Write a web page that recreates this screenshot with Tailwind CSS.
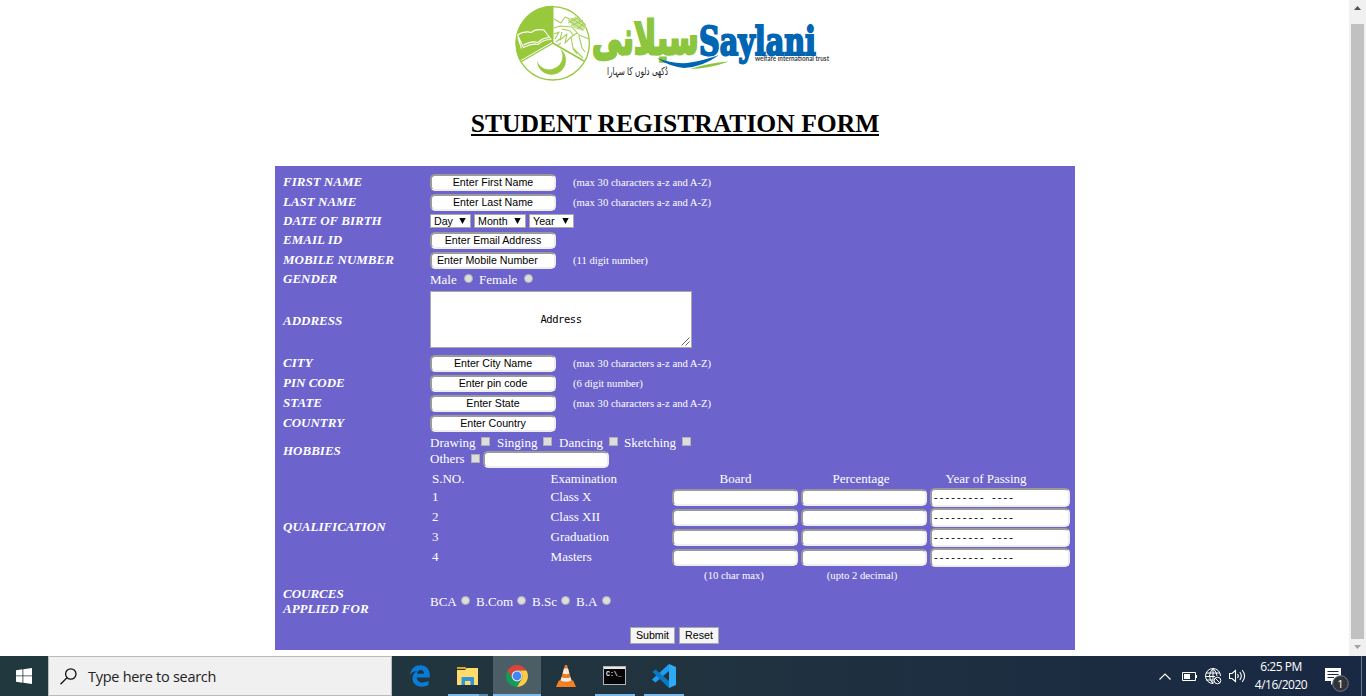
<!DOCTYPE html>
<html lang="en">
<head>
<meta charset="utf-8">
<title>Student Registration Form</title>
<script src="https://cdn.jsdelivr.net/npm/@tailwindcss/browser@4"></script>
</head>
<body class="w-[1366px] h-[696px] overflow-hidden bg-white flex flex-col">
<div class="flex h-[656px] w-full">
<main class="w-[1349px] h-[656px] flex flex-col pl-[275px] font-['Liberation_Serif',serif] text-[13px] leading-[15px] text-white">
  <header class="w-[800px] h-[166px] flex flex-col items-center text-black">
    <svg class="w-[320px] h-[90px] shrink-0" viewBox="515 0 320 90">
      <circle cx="552.7" cy="43.300" r="36.7" fill="#fff"/>
      <path d="M552.7 43V5.8A37 37 0 0 0 521 62Z" fill="#98c93c"/>
      <circle cx="552.7" cy="43.300" r="36.7" fill="none" stroke="#98c93c" stroke-width="1.3"/>
      <path d="M552.7 6V43L521 61.5M552.7 43L584 61" fill="none" stroke="#98c93c" stroke-width="1.6"/>
      <path d="M552 42.5L521 60.5" stroke="#fff" stroke-width="1" fill="none"/>
      <path d="M517.500 35L523.500 47.500Q533 43 538 44.500Q543 39.500 551 39.500L544 30Q535 28.500 531.500 32.500Q524 30.500 517.500 35ZM518 37.500L521.500 48.500M523.500 45Q532 40.500 538 42.500Q542 38 549 37.500" fill="#98c93c" stroke="#fff" stroke-width="1.1" stroke-linejoin="round"/>
      <path d="M560 48.500A14.500 14.500 0 1 1 537 61A13.200 13.200 0 1 0 560 48.500Z" fill="#98c93c"/>
      <path d="M554 19L561 23L565 17L570 19M554 28L560 26L572 27L579 35L589 39M554 34L559 32L555 39M562 32L560 40L567 34L565 43L571 37L573 48L583 58M556 42L561 38M571 37L577 33M561 43L558 45M579 36L582 48L585 52M562 29L570 31L574 36M573 49L577 54" fill="none" stroke="#a5cf56" stroke-width="1.1" stroke-linejoin="round"/>
      <path d="M568 20Q574 15 581 20L586 27L583 31L574 28Z" fill="#cce49f"/>
      <path d="M568 20L583 30M571 18L585 27M575 17L586 25M568 23L579 17M571 26L583 20M577 29L585 23" stroke="#98c93c" stroke-width=".8" fill="none"/>
      <text transform="translate(592 54) scale(1.16 1.65)" x="0" y="0" textLength="92" lengthAdjust="spacingAndGlyphs" direction="ltr" font-family="DejaVu Sans" font-weight="bold" font-size="28" fill="#8cc63f" stroke="#8cc63f" stroke-width="1.7">سیلانی</text>
      <path d="M657 58Q672 64 687 63Q706 60 719 55Q703 67 684 68Q668 66 657 58Z" fill="#0066b3"/>
      <path d="M690 69Q708 69 729 61.500Q712 62 690 69Z" fill="#8cc63f"/>
      <text x="699" y="54.500" textLength="117" lengthAdjust="spacingAndGlyphs" font-family="DejaVu Serif Condensed, DejaVu Serif" font-weight="bold" font-size="39" fill="#0066b3" stroke="#0066b3" stroke-width="2">Saylani</text>
      <text x="755" y="61" textLength="74" lengthAdjust="spacingAndGlyphs" font-family="Lato" font-weight="bold" font-size="7" fill="#444">welfare international trust</text>
      <text x="607" y="75" textLength="61" lengthAdjust="spacingAndGlyphs" direction="ltr" font-family="DejaVu Sans" font-size="11" fill="#222">دُکھی دلوں کا سہارا</text>
    </svg>
    <h1 class="mt-[18px] text-[25.6px] leading-8 font-bold whitespace-nowrap"><span class="inline-block h-[28px] leading-8 border-b-2 border-black">STUDENT REGISTRATION FORM</span></h1>
  </header>

  <form class="w-[800px] h-[484px] bg-[#6c63cc] pl-2 pt-[6px] flex flex-col [&_input]:w-[126px] [&_input]:h-[17px] [&_input]:pb-[2px] [&_input]:rounded-[5px] [&_input]:border-2 [&_input]:border-t-[#9a9a9a] [&_input]:border-l-[#9a9a9a] [&_input]:border-b-[#eee] [&_input]:border-r-[#eee] [&_input]:bg-white [&_input]:text-black [&_input]:font-['Liberation_Sans',sans-serif] [&_input]:text-[10.67px] [&_i]:size-[9px] [&_i]:bg-[#ddd] [&_i]:border [&_i]:border-[#b0b0b0]">
    <div class="flex h-5"><b class="w-[147px] italic pt-[2px]">FIRST NAME</b><input class="mt-[2px] text-center" value="Enter First Name"><span class="ml-[17px] mt-[3px] text-[10.67px]">(max 30 characters a-z and A-Z)</span></div>
    <div class="flex h-5"><b class="w-[147px] italic pt-[2px]">LAST NAME</b><input class="mt-[2px] text-center" value="Enter Last Name"><span class="ml-[17px] mt-[3px] text-[10.67px]">(max 30 characters a-z and A-Z)</span></div>
    <div class="flex h-[18px]"><b class="w-[147px] italic pt-[1px]">DATE OF BIRTH</b>
      <div class="flex gap-[3px] pt-[2px] font-['Liberation_Sans',sans-serif] text-[10.67px] leading-[13px] text-black">
        <span class="w-[41px] h-[14px] bg-white border border-[#a9a9a9] pl-[3px] pr-[4px] flex justify-between items-center">Day<svg class="w-[7px] h-[6px]" viewBox="0 0 7 6"><path d="M.3 0h6.400L3.500 6Z"/></svg></span>
        <span class="w-[52px] h-[14px] bg-white border border-[#a9a9a9] pl-[3px] pr-[4px] flex justify-between items-center">Month<svg class="w-[7px] h-[6px]" viewBox="0 0 7 6"><path d="M.3 0h6.400L3.500 6Z"/></svg></span>
        <span class="w-[45px] h-[14px] bg-white border border-[#a9a9a9] pl-[3px] pr-[4px] flex justify-between items-center">Year<svg class="w-[7px] h-[6px]" viewBox="0 0 7 6"><path d="M.3 0h6.400L3.500 6Z"/></svg></span>
      </div></div>
    <div class="flex h-5"><b class="w-[147px] italic pt-[2px]">EMAIL ID</b><input class="mt-[2px] text-center" value="Enter Email Address"></div>
    <div class="flex h-5"><b class="w-[147px] italic pt-[2px]">MOBILE NUMBER</b><input class="mt-[2px] pl-[5px]" value="Enter Mobile Number"><span class="ml-[17px] mt-[3px] text-[10.67px]">(11 digit number)</span></div>
    <div class="flex h-[19px]"><b class="w-[147px] italic pt-[1px]">GENDER</b>
      <span class="pt-[2px] w-[34px]">Male</span><i class="mt-[4px] rounded-full"></i>
      <span class="pt-[2px] ml-[6px] w-[45px]">Female</span><i class="mt-[4px] rounded-full"></i></div>
    <div class="flex h-[64px]"><b class="w-[147px] italic pt-[24px]">ADDRESS</b>
      <div class="mt-[2px] w-[262px] h-[57px] bg-white border border-[#a9a9a9] text-black flex items-center justify-center relative font-['DejaVu_Sans_Mono',monospace] text-[10.5px] tracking-[-0.45px]">Address<svg class="absolute right-[1px] bottom-[1px] size-[9px]" viewBox="0 0 9 9"><path d="M.5 8.500L8.500 .5M4.500 8.500L8.500 4.500" stroke="#666" stroke-width="1"/></svg></div></div>
    <div class="flex h-5"><b class="w-[147px] italic pt-[2px]">CITY</b><input class="mt-[2px] text-center" value="Enter City Name"><span class="ml-[17px] mt-[3px] text-[10.67px]">(max 30 characters a-z and A-Z)</span></div>
    <div class="flex h-5"><b class="w-[147px] italic pt-[2px]">PIN CODE</b><input class="mt-[2px] text-center" value="Enter pin code"><span class="ml-[17px] mt-[3px] text-[10.67px]">(6 digit number)</span></div>
    <div class="flex h-5"><b class="w-[147px] italic pt-[2px]">STATE</b><input class="mt-[2px] text-center" value="Enter State"><span class="ml-[17px] mt-[3px] text-[10.67px]">(max 30 characters a-z and A-Z)</span></div>
    <div class="flex h-5"><b class="w-[147px] italic pt-[2px]">COUNTRY</b><input class="mt-[2px] text-center" value="Enter Country"></div>
    <div class="flex h-[36px]"><b class="w-[147px] italic pt-[10px]">HOBBIES</b>
      <div>
        <div class="flex h-[18px] pt-[2px]">
          <span class="w-[51px]">Drawing</span><i class="mt-[2px]"></i>
          <span class="ml-[7px] w-[46px]">Singing</span><i class="mt-[2px]"></i>
          <span class="ml-[7px] w-[50px]">Dancing</span><i class="mt-[2px]"></i>
          <span class="ml-[6px] w-[58px]">Sketching</span><i class="mt-[2px]"></i>
        </div>
        <div class="flex"><span class="w-[41px]">Others</span><i class="mt-[3px]"></i><input class="ml-[3px]"></div>
      </div></div>
    <div class="flex h-[116px]"><b class="w-[147px] italic pt-[50px]">QUALIFICATION</b>
      <div class="flex">
        <div class="w-[242px] pl-[2px]">
          <div class="grid grid-cols-[118.6px_1fr] h-[18px] pt-[2px]"><span>S.NO.</span><span>Examination</span></div>
          <div class="grid grid-cols-[118.6px_1fr] h-5 pt-[2px]"><span>1</span><span>Class X</span></div>
          <div class="grid grid-cols-[118.6px_1fr] h-5 pt-[2px]"><span>2</span><span>Class XII</span></div>
          <div class="grid grid-cols-[118.6px_1fr] h-5 pt-[2px]"><span>3</span><span>Graduation</span></div>
          <div class="grid grid-cols-[118.6px_1fr] h-5 pt-[2px]"><span>4</span><span>Masters</span></div>
        </div>
        <div class="w-[129px] flex flex-col">
          <span class="h-5 pt-[2px] w-[127px] text-center">Board</span>
          <div class="flex flex-col gap-[3px]"><input><input><input><input></div>
          <span class="mt-[2px] w-[124px] text-center text-[10.67px]">(10 char max)</span>
        </div>
        <div class="w-[129px] flex flex-col">
          <span class="h-5 pt-[2px] w-[120px] text-center">Percentage</span>
          <div class="flex flex-col gap-[3px]"><input><input><input><input></div>
          <span class="mt-[2px] w-[122px] text-center text-[10.67px]">(upto 2 decimal)</span>
        </div>
        <div class="flex flex-col">
          <span class="h-[19px] pt-[2px] w-[112px] text-center">Year of Passing</span>
          <div class="flex flex-col gap-[1px] text-black font-['Liberation_Sans',sans-serif] text-[11px] leading-[15px] tracking-[2.1px] whitespace-nowrap">
            <div class="w-[140px] h-[19px] rounded-[5px] border-2 border-t-[#9a9a9a] border-l-[#9a9a9a] border-b-[#eee] border-r-[#eee] bg-white flex pl-[2px]"><span class="w-[58px]">---------</span><span>----</span></div>
            <div class="w-[140px] h-[19px] rounded-[5px] border-2 border-t-[#9a9a9a] border-l-[#9a9a9a] border-b-[#eee] border-r-[#eee] bg-white flex pl-[2px]"><span class="w-[58px]">---------</span><span>----</span></div>
            <div class="w-[140px] h-[19px] rounded-[5px] border-2 border-t-[#9a9a9a] border-l-[#9a9a9a] border-b-[#eee] border-r-[#eee] bg-white flex pl-[2px]"><span class="w-[58px]">---------</span><span>----</span></div>
            <div class="w-[140px] h-[19px] rounded-[5px] border-2 border-t-[#9a9a9a] border-l-[#9a9a9a] border-b-[#eee] border-r-[#eee] bg-white flex pl-[2px]"><span class="w-[58px]">---------</span><span>----</span></div>
          </div>
        </div>
      </div></div>
    <div class="flex h-[42px]"><b class="w-[147px] italic pt-[1px]">COURCES<br>APPLIED FOR</b>
      <div class="flex pt-[9px]">
        <span class="w-[31px]">BCA</span><i class="mt-[2px] rounded-full"></i>
        <span class="ml-[6px] w-[41px]">B.Com</span><i class="mt-[2px] rounded-full"></i>
        <span class="ml-[6px] w-[29px]">B.Sc</span><i class="mt-[2px] rounded-full"></i>
        <span class="ml-[6px] w-[26px]">B.A</span><i class="mt-[2px] rounded-full"></i>
      </div></div>
    <div class="flex gap-[4px] pl-[347px] font-['Liberation_Sans',sans-serif] text-[10.67px] leading-[15px] text-black">
      <button type="button" class="w-[45px] h-[17px] border border-[#a9a9a9] bg-[#f5f5f5]">Submit</button>
      <button type="button" class="w-[40px] h-[17px] border border-[#a9a9a9] bg-[#f5f5f5]">Reset</button>
    </div>
  </form>
</main>
<aside class="w-[17px] h-[656px] bg-[#f1f1f1] flex flex-col items-center">
  <svg class="w-[7px] h-[4px] mt-[6px] mb-[14px]" viewBox="0 0 7 4"><path d="M0 4L3.500 0L7 4Z" fill="#505050"/></svg>
  <div class="w-[13px] h-[615px] bg-[#c1c1c1]"></div>
  <svg class="w-[7px] h-[4px] mt-[6px]" viewBox="0 0 7 4"><path d="M0 0H7L3.500 4Z" fill="#a3a3a3"/></svg>
</aside>
</div>

<footer class="h-10 w-full flex bg-linear-to-r from-[#21383e] via-[#20333f] to-[#192843] font-['Open_Sans',sans-serif] text-white">
  <div class="w-12 flex items-center justify-center"><svg class="size-4" viewBox="0 0 16 16"><path fill="#fff" d="M0 2.200L6.500 1.300V7.500H0ZM7.300 1.200L16 0V7.500H7.300ZM0 8.300H6.500V14.700L0 13.800ZM7.300 8.300H16V16L7.300 14.800Z"/></svg></div>
  <div class="w-[344px] bg-[#f0f0f0] border border-[#bbb] flex items-center pl-[11px] text-[#222]"><svg class="w-[17px] h-[17px]" viewBox="0 0 17 17"><circle cx="10.800" cy="6" r="5.200" fill="none" stroke="#111" stroke-width="1.300"/><path d="M7 9.800L.5 16.300" stroke="#111" stroke-width="1.300"/></svg><span class="ml-[11px] mt-[1px] text-[14.5px] tracking-[-0.28px]">Type here to search</span></div>
  <div class="w-[56px] flex items-center justify-center"><svg class="w-5 h-[22px]" viewBox="0 0 20 22"><path d="M0 10C1 3.500 5 .3 10.300 .3C16 .3 19.800 4.500 19.800 10V12.500H6.800C7 16 9.500 17.500 12.500 17.500C15 17.500 17 16.800 18.500 15.800V20C16.500 21.200 14 21.700 11.500 21.700C6 21.700 2.500 18 2.500 13.500C2.500 9.500 5 7 7.500 5.800C4 6 1.500 7.500 0 10ZM7 8.800H14C14 6.500 13 5 10.800 5C8.800 5 7.300 6.700 7 8.800Z" fill="#0b7bd8"/></svg></div>
  <div class="w-[45px] flex flex-col items-center pt-[11px]"><svg class="w-[22px] h-[18px] ml-[-6px]" viewBox="0 0 22 18"><path d="M0 0H8.500L10 2H0Z" fill="#e8a317"/><path d="M0 3H8L10 1H21V18H0Z" fill="#ffdc6a"/><path d="M4.500 18V11Q4.500 10 5.500 10H16Q17 10 17 11V18H13.500V14H8V18Z" fill="#3094dc"/></svg><div class="mt-[9px] w-[40px] h-[2px] self-start bg-linear-to-r from-[#76b9ed] from-78% to-[#5688b0] to-78%"></div></div>
  <div class="w-12 bg-[#4b5d65] border-b-2 border-[#76b9ed] flex items-center justify-center"><svg class="size-[22px] mt-[1px]" viewBox="0 0 22 22"><path d="M1.500 5.500A11 11 0 0 1 20.500 5.500H11A5.500 5.500 0 0 0 6.200 13.700Z" fill="#db4437"/><path d="M1.500 5.500A11 11 0 0 0 11 22L15.800 13.700A5.500 5.500 0 0 1 6.200 13.700Z" fill="#0f9d58"/><path d="M20.500 5.500A11 11 0 0 1 11 22L15.800 13.700A5.500 5.500 0 0 0 11 5.500Z" fill="#ffcd40"/><circle cx="11" cy="11" r="5.400" fill="#f1f1f1"/><circle cx="11" cy="11" r="4.400" fill="#4285f4"/></svg></div>
  <div class="w-[54px] pt-[9px] pl-[15px]"><svg class="w-5 h-[22px]" viewBox="0 0 20 22"><path d="M2.800 15.500H17.200L20 22H0Z" fill="#f58220"/><path d="M9 0H11L16 17Q10 20.500 4 17Z" fill="#f07d1a"/><path d="M8 3.500H12L13.400 8.500Q10 10 6.600 8.500ZM5.500 12.200Q10 14 14.500 12.200L15.500 15.500Q10 18 4.500 15.500Z" fill="#ebebeb"/></svg></div>
  <div class="w-[40px] border-b-2 border-[#76b9ed] pt-[10px] pl-2"><svg class="w-[23px] h-[19px]" viewBox="0 0 23 19"><rect x=".5" y=".5" width="22" height="18" fill="#050505" stroke="#b5b5b5"/><path d="M1 2H22" stroke="#e7e7e7" stroke-width="2"/><text x="3" y="10" font-family="Liberation Mono" font-weight="bold" font-size="6.500" fill="#eee">C:\_</text></svg></div>
  <div class="ml-[9px] w-[40px] border-b-2 border-[#76b9ed] pt-2 pl-2"><svg class="w-6 h-6" viewBox="0 0 24 24"><path d="M17 0V7L3.500 18.500L1 16.500L0 15.500Z" fill="#1f9cf0"/><path d="M17 24V17L3.500 5.500L.5 8L17 24Z" fill="#0a79c4"/><path d="M17 0L24 3V21L17 24Z" fill="#2fa9f4"/></svg></div>
  <div class="ml-auto w-[207px] flex items-center relative">
    <svg class="w-3 h-[7px]" viewBox="0 0 12 7"><path d="M.5 6.500L6 1L11.500 6.500" fill="none" stroke="#fff" stroke-width="1.200"/></svg>
    <svg class="ml-[11px] w-[15px] h-[9px]" viewBox="0 0 15 9"><path d="M.5 .5H13.500V8.500H.5ZM14.500 3V6" fill="none" stroke="#fff"/><rect x="2" y="2" width="6" height="5" fill="#fff"/></svg>
    <svg class="ml-[8px] size-[17px]" viewBox="0 0 17 17"><g fill="none" stroke="#fff" stroke-width="1"><path d="M8 15.500A7.500 7.500 0 1 1 15.500 8M8 .5Q1 8 8 15.500M8 .5Q12 4 12 8M8 .5V15.500M1 5H15M.5 8.500H10M1 12H8"/><circle cx="12.500" cy="12.500" r="3.300"/><path d="M10.200 10.200L14.800 14.800"/></g></svg>
    <svg class="ml-[7px] w-[17px] h-[14px]" viewBox="0 0 17 14"><g fill="none" stroke="#fff" stroke-width="1.100"><path d="M.5 4.500H3L6.500 1.500V12.500L3 9.500H.5ZM8.500 5Q10 7 8.500 9M10.800 3Q13.800 7 10.800 11M13.200 1Q18 7 13.200 13"/></g></svg>
    <div class="ml-[8px] w-[54px] text-[12px] leading-[18px] text-center whitespace-nowrap tracking-[-0.5px]"><div>6:25 PM</div><div>4/16/2020</div></div>
    <svg class="ml-[17px] w-[24px] h-[26px] mt-[5px]" viewBox="0 0 24 26"><path d="M0 2H16V15H10L6 19V15H0Z" fill="#fff"/><path d="M2.500 5.500H13.500M2.500 8.500H13.500M2.500 11.500H9" stroke="#1a2943"/><circle cx="15.500" cy="17.500" r="7.800" fill="#303439" stroke="#777c83"/><text x="15.500" y="21.500" text-anchor="middle" font-family="Open Sans" font-size="11" fill="#fff">1</text></svg>
    <div class="absolute right-1 top-0 h-10 w-px bg-[#6f7989]"></div>
  </div>
</footer>
</body>
</html>
